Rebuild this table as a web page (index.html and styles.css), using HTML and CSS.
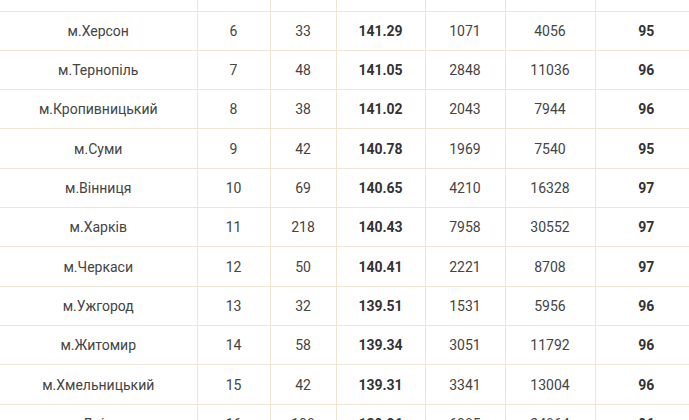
FILE: index.html
```html
<!DOCTYPE html>
<html lang="uk">
<head>
<meta charset="utf-8">
<link rel="stylesheet" href="styles.css">
</head>
<body>
<table class="rating">
  <colgroup>
    <col class="c-city"><col class="c-rank"><col class="c-count"><col class="c-score"><col class="c-a"><col class="c-b"><col class="c-pct">
  </colgroup>
  <tbody>
    <tr><td>м.Луцьк</td><td>5</td><td>40</td><td class="b">141.40</td><td>1905</td><td>7262</td><td class="b">96</td></tr>
    <tr><td>м.Херсон</td><td>6</td><td>33</td><td class="b">141.29</td><td>1071</td><td>4056</td><td class="b">95</td></tr>
    <tr><td>м.Тернопіль</td><td>7</td><td>48</td><td class="b">141.05</td><td>2848</td><td>11036</td><td class="b">96</td></tr>
    <tr><td>м.Кропивницький</td><td>8</td><td>38</td><td class="b">141.02</td><td>2043</td><td>7944</td><td class="b">96</td></tr>
    <tr><td>м.Суми</td><td>9</td><td>42</td><td class="b">140.78</td><td>1969</td><td>7540</td><td class="b">95</td></tr>
    <tr><td>м.Вінниця</td><td>10</td><td>69</td><td class="b">140.65</td><td>4210</td><td>16328</td><td class="b">97</td></tr>
    <tr><td>м.Харків</td><td>11</td><td>218</td><td class="b">140.43</td><td>7958</td><td>30552</td><td class="b">97</td></tr>
    <tr><td>м.Черкаси</td><td>12</td><td>50</td><td class="b">140.41</td><td>2221</td><td>8708</td><td class="b">97</td></tr>
    <tr><td>м.Ужгород</td><td>13</td><td>32</td><td class="b">139.51</td><td>1531</td><td>5956</td><td class="b">96</td></tr>
    <tr><td>м.Житомир</td><td>14</td><td>58</td><td class="b">139.34</td><td>3051</td><td>11792</td><td class="b">96</td></tr>
    <tr><td>м.Хмельницький</td><td>15</td><td>42</td><td class="b">139.31</td><td>3341</td><td>13004</td><td class="b">96</td></tr>
    <tr><td>м.Дніпро</td><td>16</td><td>108</td><td class="b">139.06</td><td>6085</td><td>24864</td><td class="b">96</td></tr>
  </tbody>
</table>
</body>
</html>
```
FILE: styles.css
```css
html, body {
  margin: 0;
  padding: 0;
  background: #fff;
  overflow: hidden;
}
.rating {
  border-collapse: collapse;
  table-layout: fixed;
  width: 697px;
  margin-top: -28.33px;
  font-family: Roboto, "Liberation Sans", sans-serif;
  font-size: 14px;
  color: #444;
}
.c-city { width: 197px; }
.c-rank { width: 73px; }
.c-count { width: 66px; }
.c-score { width: 89px; }
.c-a { width: 80px; }
.c-b { width: 90px; }
.c-pct { width: 102px; }
.rating tr { height: 39.33px; }
.rating td {
  padding: 0;
  text-align: center;
  vertical-align: middle;
  border-bottom: 1px solid #efe5d5;
  border-left: 1px solid #efe5d5;
  white-space: nowrap;
}
.rating td:first-child { border-left: none; }
.rating td.b {
  font-weight: 700;
  color: #333;
}
```
